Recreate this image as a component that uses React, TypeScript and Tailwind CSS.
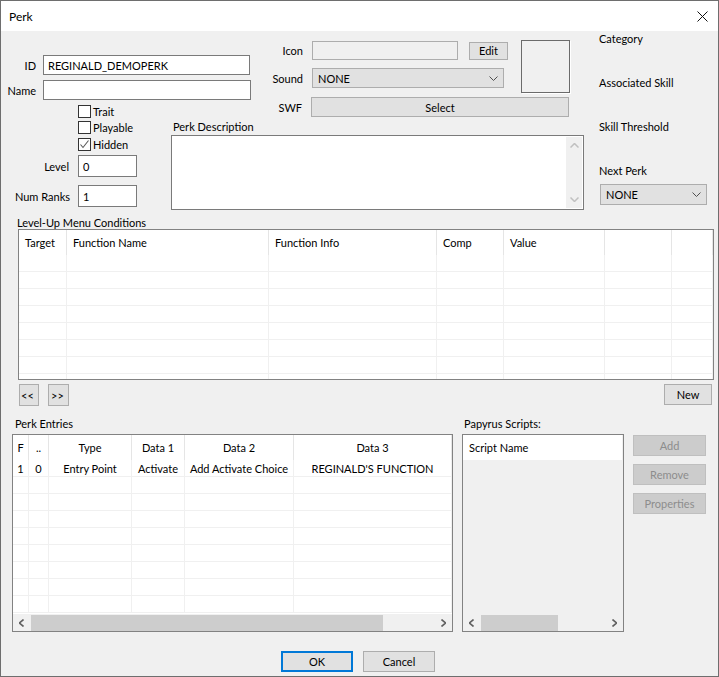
import React from 'react';

const condCols = ['w-[48px]', 'w-[202px]', 'w-[168px]', 'w-[67px]', 'w-[101px]', 'w-[67px]', 'w-[41px]'];
const condHeads = ['Target', 'Function Name', 'Function Info', 'Comp', 'Value', '', ''];

const entryCols = ['w-[16px]', 'w-[20px]', 'w-[83px]', 'w-[53px]', 'w-[109px]', 'w-[158px]'];
const entryHeads = ['F', '..', 'Type', 'Data 1', 'Data 2', 'Data 3'];
const entryRow = ['1', '0', 'Entry Point', 'Activate', 'Add Activate Choice', "REGINALD'S FUNCTION"];

function ChevronDown() {
  return (
    <svg width="9" height="5" viewBox="0 0 9 5" className="shrink-0">
      <polyline points="0.5,0.5 4.5,4.5 8.5,0.5" fill="none" stroke="#505050" strokeWidth="1" />
    </svg>
  );
}

function ArrowLR({ dir, color = '#606060' }: { dir: 'l' | 'r'; color?: string }) {
  const pts = dir === 'l' ? '4.5,0.5 0.5,4 4.5,7.5' : '0.5,0.5 4.5,4 0.5,7.5';
  return (
    <svg width="5" height="8" viewBox="0 0 5 8">
      <polyline points={pts} fill="none" stroke={color} strokeWidth="1.6" />
    </svg>
  );
}

function Combo({ w, text }: { w: string; text: string }) {
  return (
    <div className={`${w} h-[20px] flex items-center justify-between bg-[#e1e1e1] border border-[#adadad] pl-[5px] pr-[5px]`}>
      <span>{text}</span>
      <ChevronDown />
    </div>
  );
}

function Check({ label, checked }: { label: string; checked?: boolean }) {
  return (
    <div className="flex items-center h-[13px]">
      <div className="w-[13px] h-[13px] border border-[#333333] bg-white flex items-center justify-center">
        {checked && (
          <svg width="11" height="11" viewBox="0 0 11 11">
            <polyline points="1.5,5.5 4,8.5 9.5,1.5" fill="none" stroke="#5a5a5a" strokeWidth="1.1" />
          </svg>
        )}
      </div>
      <span className="ml-[2px]">{label}</span>
    </div>
  );
}

function HScroll({ thumb }: { thumb: string }) {
  return (
    <div className="h-[17px] bg-[#f0f0f0] flex items-center shrink-0">
      <div className="w-[17px] h-full flex items-center justify-center">
        <ArrowLR dir="l" />
      </div>
      <div className={`${thumb} ml-[1px] h-[16px] bg-[#cdcdcd]`} />
      <div className="flex-1" />
      <div className="w-[17px] h-full flex items-center justify-center">
        <ArrowLR dir="r" />
      </div>
    </div>
  );
}

export default function App() {
  return (
    <div className="w-[719px] h-[677px] border border-[#6e6e6e] bg-[#f0f0f0] text-[11px] text-black font-[Lato,'Liberation_Sans',sans-serif] leading-[15px] overflow-hidden">
      {/* title bar */}
      <div className="h-[30px] bg-white flex items-center pl-[8px] text-[12px]">
        <span>Perk</span>
        <svg width="11" height="11" viewBox="0 0 11 11" className="ml-auto mr-[10px]">
          <path d="M0.5 0.5 L10.5 10.5 M10.5 0.5 L0.5 10.5" stroke="#111" strokeWidth="1" />
        </svg>
      </div>

      {/* top section */}
      <div className="h-[184px] flex">
        <div className="w-[259px] flex flex-col pt-[24px]">
          <div className="flex items-center h-[20px]">
            <span className="w-[35px] text-right">ID</span>
            <div className="ml-[7px] w-[207px] h-[20px] bg-white border border-[#7a7a7a] pl-[4px] flex items-center">REGINALD_DEMOPERK</div>
          </div>
          <div className="flex items-center h-[20px] mt-[5px]">
            <span className="w-[35px] text-right">Name</span>
            <div className="ml-[7px] w-[208px] h-[20px] bg-white border border-[#7a7a7a]" />
          </div>
          <div className="ml-[77px] mt-[5px] flex flex-col">
            <Check label="Trait" />
            <div className="mt-[3px]">
              <Check label="Playable" />
            </div>
            <div className="mt-[4px]">
              <Check label="Hidden" checked />
            </div>
          </div>
          <div className="flex items-center h-[22px] mt-[4px]">
            <span className="w-[68px] text-right">Level</span>
            <div className="ml-[9px] w-[59px] h-[22px] bg-white border border-[#7a7a7a] pl-[4px] flex items-center">0</div>
          </div>
          <div className="flex items-center h-[22px] mt-[8px]">
            <span className="w-[69px] text-right">Num Ranks</span>
            <div className="ml-[8px] w-[59px] h-[22px] bg-white border border-[#7a7a7a] pl-[4px] flex items-center">1</div>
          </div>
        </div>

        <div className="w-[330px] flex flex-col pt-[9px]">
          <div className="flex items-start">
            <div className="flex flex-col">
              <div className="flex items-center h-[19px] mt-[1px]">
                <span className="w-[43px] text-right">Icon</span>
                <div className="ml-[9px] w-[146px] h-[19px] bg-[#f0f0f0] border border-[#adadad]" />
                <div className="ml-[11px] w-[39px] h-[18px] bg-[#e1e1e1] border border-[#adadad] flex items-center justify-center">Edit</div>
              </div>
              <div className="flex items-center h-[20px] mt-[8px]">
                <span className="w-[43px] text-right">Sound</span>
                <div className="ml-[9px]">
                  <Combo w="w-[192px]" text="NONE" />
                </div>
              </div>
            </div>
            <div className="ml-[13px] w-[49px] h-[53px] border border-[#6b6b6b] shadow-[1px_1px_0_#ffffff]" />
          </div>
          <div className="flex items-center h-[20px] mt-[4px]">
            <span className="w-[42px] text-right">SWF</span>
            <div className="ml-[9px] w-[258px] h-[20px] bg-[#e1e1e1] border border-[#adadad] flex items-center justify-center">Select</div>
          </div>
          <div className="mt-[2px] ml-[-87px] h-[15px]">Perk Description</div>
          <div className="mt-[1px] ml-[-89px] w-[413px] h-[75px] bg-white border border-[#7a7a7a] flex justify-end p-[1px]">
            <div className="w-[16px] h-full bg-[#f0f0f0] flex flex-col items-center justify-between py-[6px]">
              <svg width="9" height="5" viewBox="0 0 9 5">
                <polyline points="0.5,4.5 4.5,0.5 8.5,4.5" fill="none" stroke="#c0c0c0" strokeWidth="1.5" />
              </svg>
              <svg width="9" height="5" viewBox="0 0 9 5">
                <polyline points="0.5,0.5 4.5,4.5 8.5,0.5" fill="none" stroke="#c0c0c0" strokeWidth="1.5" />
              </svg>
            </div>
          </div>
        </div>

        <div className="ml-[9px] flex flex-col">
          <div className="h-[15px]">Category</div>
          <div className="h-[15px] mt-[29px]">Associated Skill</div>
          <div className="h-[15px] mt-[29px]">Skill Threshold</div>
          <div className="h-[15px] mt-[29px]">Next Perk</div>
          <div className="mt-[6px] ml-[1px]">
            <div className="w-[107px] h-[21px] flex items-center justify-between bg-[#e1e1e1] border border-[#adadad] pl-[5px] pr-[5px]">
              <span>NONE</span>
              <ChevronDown />
            </div>
          </div>
        </div>
      </div>

      {/* level-up conditions */}
      <div className="h-[14px] pl-[16px]">Level-Up Menu Conditions</div>
      <div className="ml-[17px] w-[696px] h-[151px] border border-[#828282] bg-white overflow-hidden">
        <div className="flex h-[25px]">
          {condCols.map((c, i) => (
            <div key={i} className={`${c} shrink-0 h-full border-r border-[#e5e5e5] pl-[6px] flex items-center`}>
              {condHeads[i]}
            </div>
          ))}
        </div>
        {Array.from({ length: 8 }).map((_, r) => (
          <div key={r} className="flex h-[17px]">
            {condCols.map((c, i) => (
              <div key={i} className={`${c} shrink-0 h-full border-r border-b border-[#f0f0f0]`} />
            ))}
          </div>
        ))}
      </div>

      <div className="flex mt-[4px] h-[22px]">
        <div className="ml-[18px] w-[20px] h-[22px] bg-[#e1e1e1] border border-[#adadad] flex items-center pl-[1px]">&lt;&lt;</div>
        <div className="ml-[9px] w-[21px] h-[22px] bg-[#e1e1e1] border border-[#adadad] flex items-center pl-[2px]">&gt;&gt;</div>
        <div className="ml-auto mr-[6px] w-[48px] h-[21px] bg-[#e1e1e1] border border-[#adadad] flex items-center justify-center">New</div>
      </div>

      {/* bottom section */}
      <div className="flex mt-[10px]">
        <div className="flex flex-col ml-[11px]">
          <div className="h-[15px] pl-[3px]">Perk Entries</div>
          <div className="mt-[3px] w-[441px] h-[198px] border border-[#828282] bg-white flex flex-col overflow-hidden">
            <div className="flex h-[25px] shrink-0">
              {entryCols.map((c, i) => (
                <div key={i} className={`${c} shrink-0 h-full border-r border-[#e5e5e5] flex items-center justify-center overflow-hidden`}>
                  {entryHeads[i]}
                </div>
              ))}
            </div>
            <div className="flex-1 overflow-hidden">
              {Array.from({ length: 9 }).map((_, r) => (
                <div key={r} className="flex h-[17px]">
                  {entryCols.map((c, i) => (
                    <div key={i} className={`${c} shrink-0 h-full border-r border-b border-[#f0f0f0] flex items-center justify-center whitespace-nowrap overflow-hidden`}>
                      {r === 0 ? entryRow[i] : ''}
                    </div>
                  ))}
                </div>
              ))}
            </div>
            <HScroll thumb="w-[352px]" />
          </div>
        </div>

        <div className="flex flex-col ml-[9px]">
          <div className="h-[15px] pl-[2px]">Papyrus Scripts:</div>
          <div className="mt-[3px] w-[162px] h-[198px] border border-[#828282] bg-[#f0f0f0] flex flex-col overflow-hidden">
            <div className="h-[25px] bg-white mr-[1px] pl-[6px] flex items-center shrink-0">Script Name</div>
            <div className="flex-1" />
            <HScroll thumb="w-[77px]" />
          </div>
        </div>

        <div className="flex flex-col ml-[9px] mt-[19px] w-[73px] text-[#8d8d8d]">
          <div className="h-[21px] bg-[#cccccc] border border-[#bfbfbf] flex items-center justify-center">Add</div>
          <div className="h-[21px] mt-[8px] bg-[#cccccc] border border-[#bfbfbf] flex items-center justify-center">Remove</div>
          <div className="h-[21px] mt-[8px] bg-[#cccccc] border border-[#bfbfbf] flex items-center justify-center">Properties</div>
        </div>
      </div>

      <div className="flex mt-[19px]">
        <div className="ml-[280px] w-[72px] h-[21px] bg-[#e1e1e1] border-2 border-[#0078d7] flex items-center justify-center">OK</div>
        <div className="ml-[10px] w-[72px] h-[21px] bg-[#e1e1e1] border border-[#adadad] flex items-center justify-center">Cancel</div>
      </div>
    </div>
  );
}
